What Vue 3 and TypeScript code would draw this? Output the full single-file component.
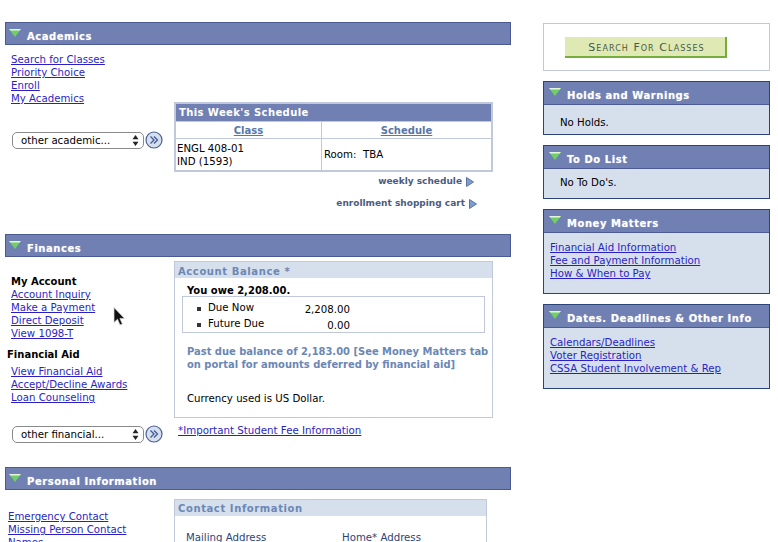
<script setup lang="ts">
const academics: string[] = ['Search for Classes', 'Priority Choice', 'Enroll', 'My Academics']
const account: string[] = ['Account Inquiry', 'Make a Payment', 'Direct Deposit', 'View 1098-T']
const aid: string[] = ['View Financial Aid', 'Accept/Decline Awards', 'Loan Counseling']
const personal: string[] = ['Emergency Contact', 'Missing Person Contact', 'Names']
const money: string[] = ['Financial Aid Information', 'Fee and Payment Information', 'How & When to Pay']
const dates: string[] = ['Calendars/Deadlines', 'Voter Registration', 'CSSA Student Involvement & Rep']
</script>

<template>
  <div class="page">
    <main class="main">
      <section class="academics">
        <h2 class="bar">
          <svg class="tri" width="12" height="8" viewBox="0 0 12 8"><path d="M0 0h12L6 8z" fill="#6fd06a" /><path d="M0 0h12l-1.400 1.400H1.400z" fill="#e4f4dc" /></svg>
          <span>Academics</span>
        </h2>
        <div class="cols">
          <div class="left">
            <ul class="links pad11 top8">
              <li v-for="l in academics" :key="l"><a href="#">{{ l }}</a></li>
            </ul>
            <div class="go go-acad">
              <div class="sel-wrap">
                <select class="sel"><option>other academic...</option></select>
                <svg class="sel-arrows" width="7" height="11" viewBox="0 0 7 11"><path d="M3.500 0 6.500 4.200H.5zM3.500 11 .5 6.800h6z" fill="#222" /></svg>
              </div>
              <svg class="gobtn" width="18" height="18" viewBox="0 0 18 18"><circle cx="9" cy="9" r="8" fill="#d6dfec" stroke="#4a5f96" stroke-width="1.200" /><path d="M5.500 5.500 9 9l-3.500 3.500M9 5.500 12.500 9 9 12.500" fill="none" stroke="#3f5a9a" stroke-width="1.300" /></svg>
            </div>
          </div>
          <div class="right right-acad">
            <table class="sched">
              <thead>
                <tr><th colspan="2" class="sched-title">This Week's Schedule</th></tr>
                <tr><th class="c1"><a href="#">Class</a></th><th class="c2"><a href="#">Schedule</a></th></tr>
              </thead>
              <tbody>
                <tr><td class="course">ENGL 408-01<br />IND (1593)</td><td>Room:&nbsp; TBA</td></tr>
              </tbody>
            </table>
            <div class="more more1">weekly schedule <svg width="8" height="10" viewBox="0 0 8 10"><path d="M.5.5 7.500 5 .5 9.500z" fill="#7f9ccb" stroke="#5b74a6" /></svg></div>
            <div class="more more2">enrollment shopping cart <svg width="8" height="10" viewBox="0 0 8 10"><path d="M.5.5 7.500 5 .5 9.500z" fill="#7f9ccb" stroke="#5b74a6" /></svg></div>
          </div>
        </div>
      </section>

      <section class="finances">
        <h2 class="bar">
          <svg class="tri" width="12" height="8" viewBox="0 0 12 8"><path d="M0 0h12L6 8z" fill="#6fd06a" /><path d="M0 0h12l-1.400 1.400H1.400z" fill="#e4f4dc" /></svg>
          <span>Finances</span>
        </h2>
        <div class="cols">
          <div class="left">
            <div class="head-a">My Account</div>
            <ul class="links pad11">
              <li v-for="l in account" :key="l"><a href="#">{{ l }}</a></li>
            </ul>
            <div class="head-b">Financial Aid</div>
            <ul class="links pad11">
              <li v-for="l in aid" :key="l"><a href="#">{{ l }}</a></li>
            </ul>
            <div class="go go-fin">
              <div class="sel-wrap">
                <select class="sel"><option>other financial...</option></select>
                <svg class="sel-arrows" width="7" height="11" viewBox="0 0 7 11"><path d="M3.500 0 6.500 4.200H.5zM3.500 11 .5 6.800h6z" fill="#222" /></svg>
              </div>
              <svg class="gobtn" width="18" height="18" viewBox="0 0 18 18"><circle cx="9" cy="9" r="8" fill="#d6dfec" stroke="#4a5f96" stroke-width="1.200" /><path d="M5.500 5.500 9 9l-3.500 3.500M9 5.500 12.500 9 9 12.500" fill="none" stroke="#3f5a9a" stroke-width="1.300" /></svg>
            </div>
          </div>
          <div class="right right-fin">
            <div class="box balance">
              <div class="box-title">Account Balance *</div>
              <div class="owe">You owe 2,208.00.</div>
              <div class="due">
                <div class="due-row"><span class="sq"></span><span class="due-label">Due Now</span><span class="due-val">2,208.00</span></div>
                <div class="due-row"><span class="sq"></span><span class="due-label">Future Due</span><span class="due-val">0.00</span></div>
              </div>
              <p class="past">Past due balance of 2,183.00 [See Money Matters tab on portal for amounts deferred by financial aid]</p>
              <p class="currency">Currency used is US Dollar.</p>
            </div>
            <a class="fee" href="#">*Important Student Fee Information</a>
          </div>
        </div>
      </section>

      <section class="personal">
        <h2 class="bar">
          <svg class="tri" width="12" height="8" viewBox="0 0 12 8"><path d="M0 0h12L6 8z" fill="#6fd06a" /><path d="M0 0h12l-1.400 1.400H1.400z" fill="#e4f4dc" /></svg>
          <span>Personal Information</span>
        </h2>
        <div class="cols">
          <div class="left">
            <ul class="links pad3 top20">
              <li v-for="l in personal" :key="l"><a href="#">{{ l }}</a></li>
            </ul>
          </div>
          <div class="right right-per">
            <div class="box contact">
              <div class="box-title">Contact Information</div>
              <div class="addr"><span>Mailing Address</span><span>Home* Address</span></div>
            </div>
          </div>
        </div>
      </section>
    </main>

    <aside class="side">
      <div class="search"><button class="search-btn" type="button">Search For Classes</button></div>
      <div class="panel">
        <h3 class="bar panel-bar"><svg class="tri" width="12" height="8" viewBox="0 0 12 8"><path d="M0 0h12L6 8z" fill="#6fd06a" /><path d="M0 0h12l-1.400 1.400H1.400z" fill="#e4f4dc" /></svg><span>Holds and Warnings</span></h3>
        <p class="panel-text holds">No Holds.</p>
      </div>
      <div class="panel">
        <h3 class="bar panel-bar"><svg class="tri" width="12" height="8" viewBox="0 0 12 8"><path d="M0 0h12L6 8z" fill="#6fd06a" /><path d="M0 0h12l-1.400 1.400H1.400z" fill="#e4f4dc" /></svg><span>To Do List</span></h3>
        <p class="panel-text todo">No To Do's.</p>
      </div>
      <div class="panel">
        <h3 class="bar panel-bar"><svg class="tri" width="12" height="8" viewBox="0 0 12 8"><path d="M0 0h12L6 8z" fill="#6fd06a" /><path d="M0 0h12l-1.400 1.400H1.400z" fill="#e4f4dc" /></svg><span>Money Matters</span></h3>
        <ul class="links panel-links"><li v-for="l in money" :key="l"><a href="#">{{ l }}</a></li></ul>
      </div>
      <div class="panel">
        <h3 class="bar panel-bar"><svg class="tri" width="12" height="8" viewBox="0 0 12 8"><path d="M0 0h12L6 8z" fill="#6fd06a" /><path d="M0 0h12l-1.400 1.400H1.400z" fill="#e4f4dc" /></svg><span>Dates. Deadlines &amp; Other Info</span></h3>
        <ul class="links panel-links"><li v-for="l in dates" :key="l"><a href="#">{{ l }}</a></li></ul>
      </div>
    </aside>

    <svg class="cursor" width="12" height="19" viewBox="0 0 12 19"><path d="M1 .5v15l3.500-3.300 2.500 5.800 2.400-1-2.500-5.600H11.500z" fill="#111" stroke="#ddd" stroke-width=".7" /></svg>
  </div>
</template>

<style scoped>
.page {
  position: relative;
  display: flex;
  gap: 32px;
  width: 778px;
  height: 542px;
  padding: 22px 0 0 5px;
  box-sizing: border-box;
  overflow: hidden;
  font-family: "DejaVu Sans", Verdana, sans-serif;
  font-size: 10.200px;
  line-height: 13px;
  color: #000;
  background: #fff;
}
.main { width: 506px; flex: none; }
.side { width: 227px; flex: none; display: flex; flex-direction: column; gap: 10px; margin-top: 1px; }
.academics { height: 212px; }
.finances { height: 233px; }
.bar {
  display: flex;
  align-items: center;
  gap: 6px;
  height: 23px;
  margin: 0;
  padding: 0 0 0 3px;
  box-sizing: border-box;
  background: #7180b3;
  border: 1px solid #4b5a92;
  color: #fff;
  font-size: 10px;
  font-weight: bold;
  letter-spacing: 0.55px;
  font-family: "DejaVu Sans", Verdana, sans-serif;
  text-shadow: 0 0 1px rgba(255, 255, 255, 0.5);
}
.bar span { padding-top: 6px; line-height: 13px; }
.tri { flex: none; margin-top: -2px; }
.cols { display: flex; }
.left { width: 169px; flex: none; }
.links { list-style: none; margin: 0; padding: 0; }
.links a { color: #2a1fc4; }
.pad11 { padding-left: 6px; }
.pad3 { padding-left: 3px; }
.top8 { padding-top: 8px; }
.top20 { padding-top: 20px; }
.go { display: flex; align-items: center; padding-left: 7px; gap: 1px; }
.go-acad { margin-top: 26px; }
.go-fin { margin-top: 21px; }
.sel-wrap { position: relative; width: 132px; height: 17px; }
.sel {
  display: block;
  width: 132px;
  height: 17px;
  padding: 0 0 0 8px;
  border: 1px solid #8a8a8a;
  border-radius: 5px;
  background: #fff;
  appearance: none;
  font: 10.200px "DejaVu Sans", Verdana, sans-serif;
  color: #000;
}
.sel-arrows { position: absolute; right: 5px; top: 3px; pointer-events: none; }
.gobtn { flex: none; }
.right-acad { padding-top: 57px; width: 319px; }
.sched { width: 319px; border-collapse: collapse; border: 2px solid #c0c8dc; }
.sched th, .sched td { border: 1px solid #c0c8dc; padding: 0 2px; }
.sched-title {
  background: #7180b3;
  color: #fff;
  text-align: left;
  height: 17px;
  font-size: 10px;
  letter-spacing: 0.4px;
}
.sched .sched-title { padding-left: 3px; }
.sched .c1, .sched .c2 { height: 16px; font-size: 10px; text-align: center; }
.sched .c1 { width: 141px; }
.sched th a { color: #5876a8; }
.sched td { height: 30px; }
.sched .course { padding-top: 1px; padding-left: 1px; }
.more {
  display: flex;
  justify-content: flex-end;
  align-items: center;
  gap: 4px;
  color: #4c5c80;
  font-size: 9px;
  font-weight: bold;
}
.more1 { margin-top: 3px; padding-right: 19px; }
.more2 { margin-top: 9px; padding-right: 16px; }
.head-a { font-weight: bold; font-size: 10px; padding: 18px 0 0 6px; }
.head-b { font-weight: bold; font-size: 10px; padding: 8px 0 4px 2px; }
.right-fin { padding-top: 4px; width: 319px; }
.box { border: 1px solid #c0c8dc; box-sizing: border-box; }
.box-title {
  background: #d6dfec;
  height: 16px;
  line-height: 18px;
  padding-left: 3px;
  color: #6b87b5;
  font-weight: bold;
  font-size: 10px;
  letter-spacing: 0.6px;
}
.balance { height: 157px; }
.balance .box-title { line-height: 19px; }
.owe { font-weight: bold; font-size: 10px; padding: 6px 0 0 12px; }
.due {
  margin: -1px 7px 0 7px;
  height: 37px;
  box-sizing: border-box;
  border: 1px solid #c0c8dc;
  padding: 3px 0 0 14px;
}
.due-row { display: flex; align-items: center; height: 16px; }
.sq { width: 4px; height: 4px; background: #333; margin: 2px 7px 0 0; flex: none; }
.due-label { width: 90px; margin-bottom: 2px; }
.due-val { width: 52px; text-align: right; margin-top: 2px; }
.past {
  margin: 12px 0 0 12px;
  color: #6b87b5;
  font-weight: bold;
  font-size: 9.950px;
  width: 305px;
}
.currency { margin: 21px 0 0 12px; }
.fee { display: inline-block; margin: 6px 0 0 4px; color: #2a1fc4; font-size: 10.250px; }
.right-per { padding-top: 9px; width: 313px; }
.contact { height: 60px; }
.addr { display: flex; padding: 15px 0 0 11px; color: #2b4478; }
.addr span { flex: none; width: 156px; }
.search {
  height: 48px;
  box-sizing: border-box;
  border: 1px solid #c0c8dc;
  padding: 13px 0 0 21px;
  background: #fff;
}
.search-btn {
  display: block;
  width: 162px;
  height: 21px;
  padding: 0 0 0 3px;
  background: #dfe9b4;
  border: 0;
  border-right: 2px solid #76ae3e;
  border-bottom: 2px solid #76ae3e;
  color: #4a5a46;
  font: 11px/21px "DejaVu Sans", Verdana, sans-serif;
  font-variant: small-caps;
  letter-spacing: 1.050px;
}
.panel { border: 1px solid #2b4478; background: #d6dfec; }
.panel-bar { height: 23px; border-width: 0 0 1px 0; padding-left: 5px; }
.panel-bar span { padding-top: 4px; }
.panel-text { margin: 0; padding-left: 16px; height: 29px; box-sizing: border-box; }
.holds { padding-top: 11px; }
.todo { padding-top: 7px; }
.panel-links { padding: 8px 0 13px 6px; }
.cursor { position: absolute; left: 113px; top: 307px; }
</style>
